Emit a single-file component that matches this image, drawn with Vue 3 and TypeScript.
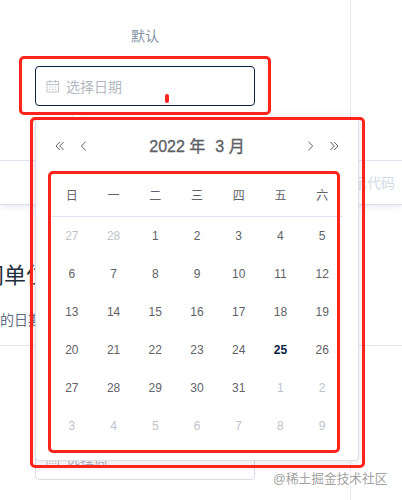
<script setup lang="ts">
interface Day {
  n: number
  kind: 'prev' | 'normal' | 'today' | 'next'
}

const weekdays: string[] = ['日', '一', '二', '三', '四', '五', '六']

function day(i: number): Day {
  if (i < 2) return { n: 27 + i, kind: 'prev' }
  const n = i - 1
  if (n > 31) return { n: n - 31, kind: 'next' }
  return { n, kind: n === 25 ? 'today' : 'normal' }
}

const weeks: Day[][] = Array.from({ length: 6 }, (_, r) =>
  Array.from({ length: 7 }, (_, c) => day(r * 7 + c)),
)
</script>

<template>
  <div class="page">
    <section class="demo">
      <div class="source">
        <div class="block">
          <span class="label">默认</span>
          <div class="input active">
            <svg class="cal" viewBox="0 0 14 14"><path d="M1 2.5h11.5v10.5H1zM1 5.5h11.5M4 .8v3M9.5 .8v3" /><path class="dots" d="M3.3 8h7M3.3 10.5h7" /></svg>
            <span>选择日期</span>
          </div>
        </div>
        <div class="block side"></div>
      </div>
      <div class="control">显示代码</div>
    </section>
    <h3>间单位</h3>
    <p class="desc">的日期</p>
    <section class="demo second">
      <div class="source">
        <div class="block">
          <div class="input">
            <svg class="cal" viewBox="0 0 14 14"><path d="M1 2.5h11.5v10.5H1zM1 5.5h11.5M4 .8v3M9.5 .8v3" /><path class="dots" d="M3.3 8h7M3.3 10.5h7" /></svg>
            <span>选择周</span>
          </div>
        </div>
        <div class="block side"></div>
      </div>
    </section>

    <div class="picker">
      <span class="arrow"></span>
      <header>
        <svg class="nav" viewBox="0 0 12 12"><path d="M5.8 2 2 6l3.8 4M9.5 2 5.7 6l3.8 4" /></svg>
        <svg class="nav" viewBox="0 0 12 12"><path d="M7.6 1.6 3.4 6l4.2 4.4" /></svg>
        <div class="title"><span>2022 年</span><span>3 月</span></div>
        <svg class="nav" viewBox="0 0 12 12"><path d="M4.4 1.6 8.6 6l-4.2 4.4" /></svg>
        <svg class="nav" viewBox="0 0 12 12"><path d="M2.5 2l3.8 4-3.8 4M6.2 2 10 6l-3.8 4" /></svg>
      </header>
      <div class="row names">
        <span v-for="w in weekdays" :key="w">{{ w }}</span>
      </div>
      <div v-for="(week, i) in weeks" :key="i" class="row">
        <span v-for="(d, j) in week" :key="j" :class="d.kind">{{ d.n }}</span>
      </div>
    </div>

    <i class="mark mark-input"></i>
    <i class="mark mark-picker"></i>
    <i class="mark mark-table"></i>
    <i class="dash"></i>
    <span class="watermark">@稀土掘金技术社区</span>
  </div>
</template>

<style>
body {
  margin: 0;
  background: #fff;
}
</style>

<style scoped>
.page {
  position: relative;
  width: 402px;
  height: 500px;
  overflow: hidden;
  background: #fff;
  font-family: "Liberation Sans", "Noto Sans CJK SC", sans-serif;
  font-size: 14px;
  color: #5e6d82;
}
.demo {
  box-sizing: border-box;
  height: 205px;
  border-bottom: 1px solid #dde0ec;
  box-shadow: 0 2px 6px rgba(200, 205, 230, 0.4);
}
.source {
  display: flex;
  height: 160px;
}
.block {
  box-sizing: border-box;
  width: 351px;
  padding: 26px 0 0 35px;
  border-right: 1px solid #eaeaf3;
}
.block.side {
  flex: 1;
  width: auto;
  padding: 0;
  border: 0;
}
.label {
  display: block;
  width: 220px;
  height: 21px;
  margin-bottom: 19px;
  line-height: 21px;
  text-align: center;
  color: #8492a6;
}
.input {
  box-sizing: border-box;
  display: flex;
  align-items: center;
  width: 220px;
  height: 40px;
  padding: 0 0 1px 10px;
  gap: 6px;
  border: 1px solid #d8dce8;
  border-radius: 4px;
  color: #b4b8c1;
}
.input.active {
  border-color: #062440;
}
.cal {
  width: 14px;
  height: 14px;
  fill: none;
  stroke: #b9bdc6;
  stroke-width: 0.9;
}
.dots {
  stroke-dasharray: 1.4 1.4;
}
.control {
  box-sizing: border-box;
  height: 44px;
  padding-right: 7px;
  border-top: 1px solid #dfe5f4;
  line-height: 44px;
  text-align: right;
  color: #d3dce6;
}
h3 {
  margin: 55px 0 0 -18px;
  font-size: 22px;
  font-weight: 400;
  line-height: 32px;
  color: #1f2f3d;
}
.desc {
  margin: 17px 0 0;
  line-height: 22px;
}
.second {
  height: 200px;
  margin-top: 14px;
  border-top: 1px solid #e4e6ee;
  border-bottom: 0;
  box-shadow: none;
}
.second .source {
  height: 200px;
}
.second .block {
  padding-top: 94px;
}
.second .block.side {
  padding: 0;
}
.picker {
  position: absolute;
  top: 117px;
  left: 35px;
  box-sizing: border-box;
  width: 324px;
  height: 344px;
  padding: 0 15px;
  border: 1px solid #dcdfe9;
  border-radius: 4px;
  background: #fff;
  box-shadow: 0 2px 12px rgba(0, 0, 0, 0.1);
  color: #606266;
}
.arrow {
  position: absolute;
  top: -5px;
  left: 37px;
  width: 8px;
  height: 8px;
  border: 1px solid #e8eaf1;
  border-right: 0;
  border-bottom: 0;
  background: #fff;
  transform: rotate(45deg);
}
header {
  display: flex;
  align-items: center;
  height: 30px;
  padding: 13px 3px 0;
  gap: 12px;
}
.nav {
  width: 12px;
  height: 12px;
  fill: none;
  stroke: #4b4e53;
  stroke-width: 0.9;
}
.title {
  flex: 1;
  display: flex;
  justify-content: center;
  gap: 10px;
  font-size: 16px;
  font-weight: 400;
  line-height: 31px;
  -webkit-text-stroke: 0.35px currentColor;
}
.row {
  display: grid;
  grid-template-columns: repeat(7, 1fr);
  height: 38px;
  line-height: 38px;
  text-align: center;
  font-size: 12px;
}
.names {
  height: 41px;
  margin-top: 14px;
  border-bottom: 1px solid #e2e5f1;
  line-height: 43px;
}
.prev,
.next {
  color: #bfc3cb;
}
.today {
  font-weight: 700;
  color: #062440;
}
.mark {
  position: absolute;
  box-sizing: border-box;
  border: 3px solid #ff231d;
  border-radius: 5px;
}
.mark-input {
  top: 56px;
  left: 19px;
  width: 252px;
  height: 59px;
}
.mark-picker {
  top: 117px;
  left: 30px;
  width: 335px;
  height: 351px;
}
.mark-table {
  top: 171px;
  left: 48px;
  width: 292px;
  height: 282px;
}
.dash {
  position: absolute;
  top: 94px;
  left: 165px;
  width: 4px;
  height: 9px;
  border-radius: 2px;
  background: #ff231d;
}
.watermark {
  position: absolute;
  top: 469px;
  left: 273px;
  font-size: 12.7px;
  line-height: 20px;
  white-space: nowrap;
  color: #a2a2a2;
}
</style>
